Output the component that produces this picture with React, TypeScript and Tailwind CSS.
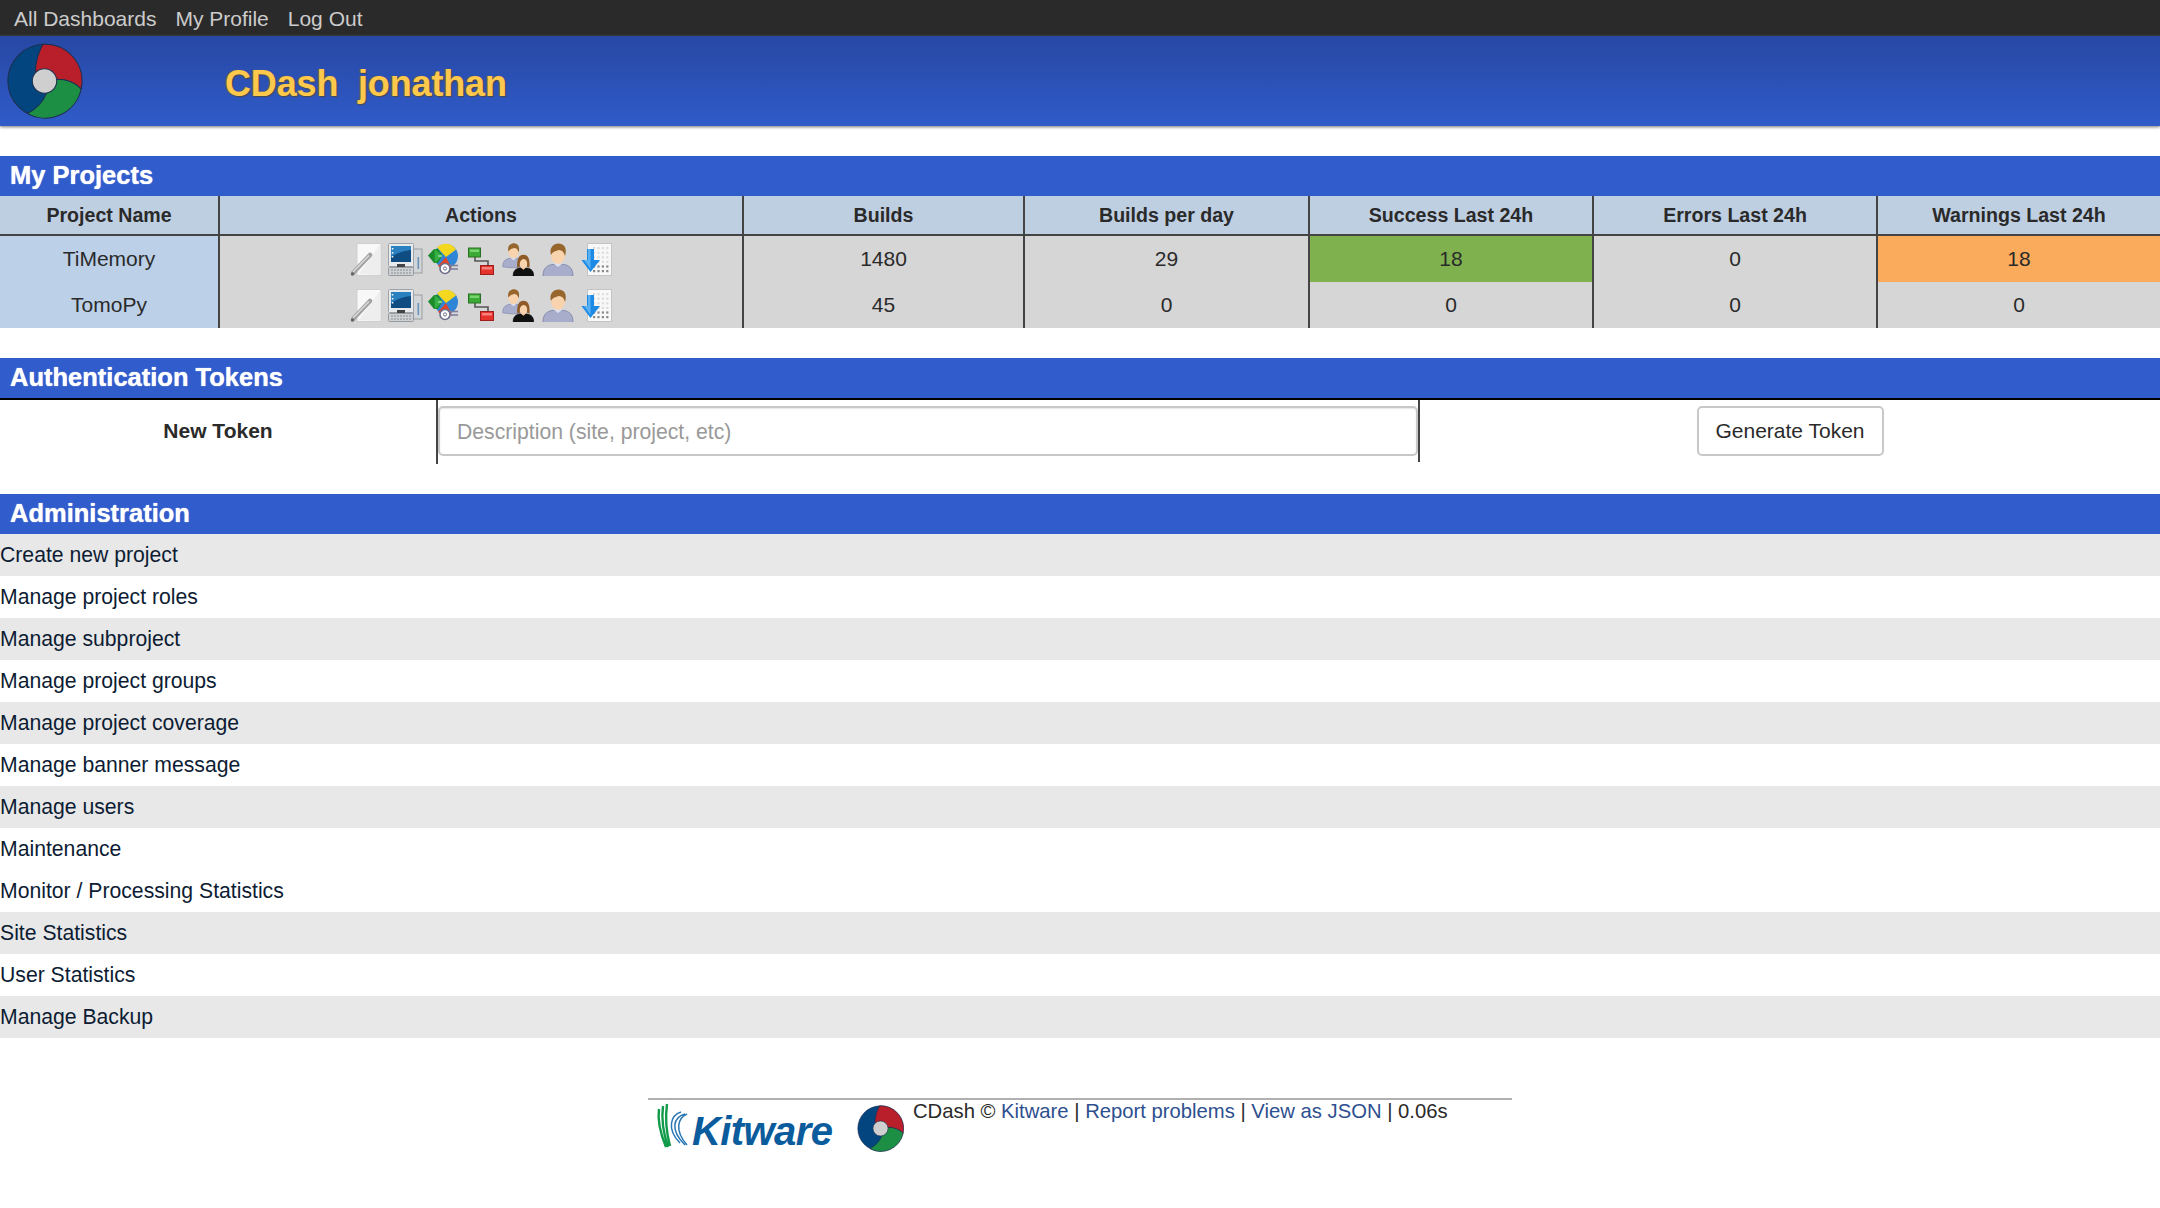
const FONT = "font-['Liberation_Sans',Arial,sans-serif]";

function CDashLogo({ className }: { className: string }) {
  return (
    <svg viewBox="-2 -2 224 224" className={className}>
      <circle cx="110" cy="110" r="108" fill="#03457f" stroke="#1d2f4f" strokeWidth="3" />
      <path d="M105 2Q85 40 83 83L147 105Q190 105 218 133A108 108 0 0 0 105 2Z" fill="#b81f2a" stroke="#1d2f4f" strokeWidth="3" />
      <path d="M147 105Q190 105 218 133A108 108 0 0 1 60 206Q100 185 115 148Z" fill="#1d8f45" stroke="#1d2f4f" strokeWidth="3" />
      <circle cx="110" cy="110" r="36" fill="#cfcfcf" stroke="#1d2f4f" strokeWidth="3" />
    </svg>
  );
}

function IconEdit() {
  return (
    <svg width="38" height="33" viewBox="0 0 38 33" className="shrink-0">
      <rect x="7" y="0.5" width="24" height="32" fill="#f8f8f8" stroke="#cfcfcf" />
      <path d="M9 31 30.5 1V32Z" fill="#e9e9e9" opacity=".7" />
      <path d="M3.5 29.5 20 12" stroke="#a2a2a2" strokeWidth="4.5" strokeLinecap="round" />
      <path d="M3 29 19 12.5" stroke="#dcdcdc" strokeWidth="1.4" />
      <circle cx="2.5" cy="31" r="1.8" fill="#666" />
    </svg>
  );
}

function IconComputer() {
  return (
    <svg width="40" height="33" viewBox="0 0 40 33" className="shrink-0">
      <rect x="25.5" y="6" width="8.5" height="24" fill="#d2d5d8" stroke="#9a9ea2" />
      <rect x="29.5" y="14" width="1.6" height="12" fill="#6c93b8" />
      <rect x="0.5" y="0.5" width="25" height="23" rx="1" fill="#e8ebee" stroke="#a0a4a8" />
      <rect x="3" y="3" width="20" height="16" fill="#0e4c82" />
      <path d="M3 3H23V7Q12 8 3 14Z" fill="#2b80c0" />
      <rect x="3.8" y="5" width="1.5" height="1.5" fill="#fff" /><rect x="3.8" y="9" width="1.5" height="1.5" fill="#fff" /><rect x="3.8" y="13" width="1.5" height="1.5" fill="#fff" />
      <rect x="9" y="21" width="8" height="3" fill="#444" />
      <rect x="0.5" y="24.5" width="25" height="8" rx="1" fill="#cfd2d5" stroke="#969a9e" />
      <path d="M3 27H23M3 30H23" stroke="#8b8e91" strokeWidth="1.2" strokeDasharray="2 1" />
    </svg>
  );
}

function IconChart() {
  return (
    <svg width="40" height="33" viewBox="0 0 40 33" className="shrink-0">
      <circle cx="18" cy="13" r="12" fill="#2f86d6" />
      <path d="M18 14 9 4.5A12 12 0 0 1 28 6.5Z" fill="#f4d81f" />
      <path d="M18 14 10 23 14 26H24Z" fill="#e0452c" />
      <path d="M0 12.5 6 6H10L14.5 12.5 10 20H6Z" fill="#1c8c2b" />
      <path d="M6.5 6 14.5 12.5 7 20Z" fill="#35b044" />
      <path d="M10 13H14" stroke="#fff" strokeWidth=".8" />
      <circle cx="17" cy="25.5" r="5" fill="#fff" stroke="#6d6d8c" strokeWidth="1.6" />
      <circle cx="17" cy="25.5" r="1.6" fill="#fff" stroke="#6d6d8c" />
      <path d="M21 22.5H30M21 26H30" stroke="#7b7b9b" strokeWidth="1.5" />
    </svg>
  );
}

function IconNetwork() {
  return (
    <svg width="34" height="33" viewBox="0 0 34 33" className="shrink-0">
      <path d="M7 13V18H20V24" fill="none" stroke="#555" strokeWidth="1.6" />
      <rect x="0.5" y="5" width="12" height="9" fill="#3cab36" stroke="#2a6e25" />
      <rect x="2" y="6.5" width="9" height="2.5" fill="#7bd46f" />
      <rect x="12.5" y="22.5" width="13" height="9" fill="#e5322b" stroke="#9d1e1a" />
      <rect x="14" y="24" width="10" height="2.5" fill="#f5827c" />
    </svg>
  );
}

function Person({ x, y, s, female }: { x: number; y: number; s: number; female?: boolean }) {
  const dark = female;
  return (
    <g transform={`translate(${x} ${y}) scale(${s})`}>
      <path d="M1 33C1 24 6 21 16 21C26 21 31 24 31 33C22 35 10 35 1 33Z" fill={dark ? "#111" : "#a7adca"} stroke={dark ? "#000" : "#868dae"} />
      <path d="M11 20H21L16 24Z" fill={dark ? "#f4c89f" : "#dde0ef"} />
      <ellipse cx="16" cy="12" rx="7" ry="9" fill="#f8d3ae" />
      {female ? (
        <path d="M7 21C6 7 10 2 16 2C23 2 26 8 25 21L21 19C23 12 20 8 16 8C12 9 10 13 11 19Z" fill="#8f5a26" />
      ) : (
        <path d="M9 12C7 5 11 0.5 17 0.5C23 1 25 6 23 13C22 9 20 7 17 7C14 8 11 8 9 12Z" fill="#96662c" />
      )}
    </g>
  );
}

function IconUsers() {
  return (
    <svg width="40" height="33" viewBox="0 0 40 33" className="shrink-0">
      <Person x={0} y={0} s={0.72} />
      <Person x={10.5} y={10.5} s={0.68} female />
    </svg>
  );
}

function IconUser() {
  return (
    <svg width="39" height="33" viewBox="0 0 39 33" className="shrink-0">
      <Person x={0} y={0} s={1} />
    </svg>
  );
}

function IconDownload() {
  const dots = [];
  for (let r = 0; r < 6; r++) for (let c = 0; c < 4; c++) dots.push(<rect key={`${r}-${c}`} x={12 + c * 4.4} y={4 + r * 4.6} width="2.2" height="2.2" fill={r > 3 ? "#8a8a8a" : "#dddddd"} />);
  return (
    <svg width="31" height="33" viewBox="0 0 31 33" className="shrink-0">
      <rect x="6.5" y="0.5" width="24" height="32" fill="#f8f8f8" stroke="#c4c4c4" />
      {dots}
      <path d="M6 6H13V17H19L9.5 29 0.5 17H6Z" fill="#1d8ae6" />
      <path d="M7 6H9.5V26L3 17H7Z" fill="#5ab1f1" />
    </svg>
  );
}

function Actions() {
  return (
    <div className="flex justify-center">
      <IconEdit /><IconComputer /><IconChart /><IconNetwork /><IconUsers /><IconUser /><IconDownload />
    </div>
  );
}

function SectionBar({ title }: { title: string }) {
  return (
    <div className="h-10 bg-[#305ccc] pb-[2px] pl-[10px] text-[25.5px] leading-[38px] font-bold text-white [text-shadow:0_0_1px_#fff]">
      {title}
    </div>
  );
}

const HEAD = ["Project Name", "Actions", "Builds", "Builds per day", "Success Last 24h", "Errors Last 24h", "Warnings Last 24h"];
const PROJECTS = [
  { name: "TiMemory", builds: "1480", perDay: "29", success: "18", errors: "0", warnings: "18", ok: true },
  { name: "TomoPy", builds: "45", perDay: "0", success: "0", errors: "0", warnings: "0", ok: false },
];
const ADMIN = [
  ["Create new project", true],
  ["Manage project roles", false],
  ["Manage subproject", true],
  ["Manage project groups", false],
  ["Manage project coverage", true],
  ["Manage banner message", false],
  ["Manage users", true],
  ["Maintenance", false],
  ["Monitor / Processing Statistics", false],
  ["Site Statistics", true],
  ["User Statistics", false],
  ["Manage Backup", true],
] as const;

const CELL = "h-[46px] p-0 text-center text-[21px] text-[#2a2a2a] border-r-2 border-[#444] bg-[#d6d6d6]";

export default function App() {
  return (
    <div className={`${FONT} min-h-[1208px] bg-white`}>
      <nav className="flex h-9 items-center gap-[19px] bg-[#2a2a2a] pl-[14px] pt-[1px] text-[21px] text-[#cccccc]">
        <a>All Dashboards</a>
        <a>My Profile</a>
        <a>Log Out</a>
      </nav>

      <header className="flex h-[90px] items-start bg-gradient-to-b from-[#2748a4] to-[#305bc9] shadow-[0_1px_3px_#777]">
        <CDashLogo className="ml-[6px] mt-[7px] h-[76px] w-[77px] shrink-0" />
        <h1 className="ml-[142px] mt-[26px] whitespace-pre text-[36px] leading-[44px] font-bold tracking-[-0.15px] text-[#fdc84b] [text-shadow:1px_1px_1px_#4a4a4a,-1px_0_1px_#6a5a40]">
          CDash  jonathan
        </h1>
      </header>

      <section className="mt-[30px]">
        <SectionBar title="My Projects" />
        <table className="w-[2160px] table-fixed border-separate border-spacing-0">
          <colgroup>
            <col className="w-[220px]" /><col className="w-[524px]" /><col className="w-[281px]" /><col className="w-[285px]" /><col className="w-[284px]" /><col className="w-[284px]" /><col className="w-[282px]" />
          </colgroup>
          <thead>
            <tr>
              {HEAD.map((h, i) => (
                <th key={h} className={`h-10 border-b-2 border-[#444] bg-[#bfcfe2] p-0 pt-[1px] text-[19.6px] font-bold text-[#2a2a2a] ${i < 6 ? "border-r-2" : ""}`}>{h}</th>
              ))}
            </tr>
          </thead>
          <tbody>
            {PROJECTS.map((p) => (
              <tr key={p.name}>
                <td className={`${CELL} !bg-[#bcd0e8]`}>{p.name}</td>
                <td className={CELL}><Actions /></td>
                <td className={CELL}>{p.builds}</td>
                <td className={CELL}>{p.perDay}</td>
                <td className={`${CELL} ${p.ok ? "!bg-[#7fb24f]" : ""}`}>{p.success}</td>
                <td className={CELL}>{p.errors}</td>
                <td className={`${CELL} !border-r-0 ${p.ok ? "!bg-[#fbab5c]" : ""}`}>{p.warnings}</td>
              </tr>
            ))}
          </tbody>
        </table>
      </section>

      <section className="mt-[30px]">
        <SectionBar title="Authentication Tokens" />
        <div className="flex h-[66px] border-t-2 border-black">
          <div className="flex h-16 w-[438px] shrink-0 items-center justify-center border-r-2 border-[#444] pb-[3px] text-[21px] font-bold text-[#2a2a2a]">New Token</div>
          <div className="h-[62px] w-[982px] shrink-0 border-r-2 border-[#444] pt-[6px]">
            <input
              placeholder="Description (site, project, etc)"
              className="h-[50px] w-full rounded-[5px] border-2 border-[#c8c8c8] px-[17px] pt-[2px] text-[21.2px] text-[#333] shadow-[inset_0_1px_2px_rgba(0,0,0,0.1)] outline-none placeholder:text-[#999]"
            />
          </div>
          <div className="flex flex-1 justify-center pt-[6px]">
            <button className="h-[50px] w-[187px] rounded-[5px] border-2 border-[#c8c8c8] bg-white text-[21px] text-[#2a2a2a]">Generate Token</button>
          </div>
        </div>
      </section>

      <section className="mt-[30px]">
        <SectionBar title="Administration" />
        <ul>
          {ADMIN.map(([label, shaded]) => (
            <li key={label} className={`h-[42px] text-[21.2px] leading-[42px] text-[#0d1c33] ${shaded ? "bg-[#e8e8e8]" : "bg-white"}`}>
              <a>{label}</a>
            </li>
          ))}
        </ul>
      </section>

      <footer className="mx-auto mt-[60px] flex h-[60px] w-[864px] border-t-2 border-[#b0b0b0]">
        <div className="ml-[6px] mt-[3px] flex h-[46px] w-[203px] shrink-0 items-center">
          <svg width="34" height="46" viewBox="0 0 34 46" className="shrink-0">
            <path d="M5 6C3 20 7 32 12 44M9 3C7 18 10 32 14 44M13 1C11 16 13 32 16 43" fill="none" stroke="#119a4a" strokeWidth="2.4" />
            <path d="M31 11C20 14 15 26 31 42M33 11C24 15 20 27 33 42M27 9C17 12 12 26 26 40" fill="none" stroke="#2a78b5" strokeWidth="1.5" />
          </svg>
          <span className="ml-[4px] pt-[9px] text-[40px] leading-[46px] font-bold italic tracking-[-0.6px] text-[#0b5c9c]">Kitware</span>
        </div>
        <CDashLogo className="mt-[5px] h-[47px] w-[47px] shrink-0" />
        <p className="ml-[9px] text-[20.25px] leading-[22px] text-[#2a2a2a]">
          CDash © <a className="text-[#2d4f8f]">Kitware</a> | <a className="text-[#2d4f8f]">Report problems</a> | <a className="text-[#2d4f8f]">View as JSON</a> | 0.06s
        </p>
      </footer>
    </div>
  );
}
